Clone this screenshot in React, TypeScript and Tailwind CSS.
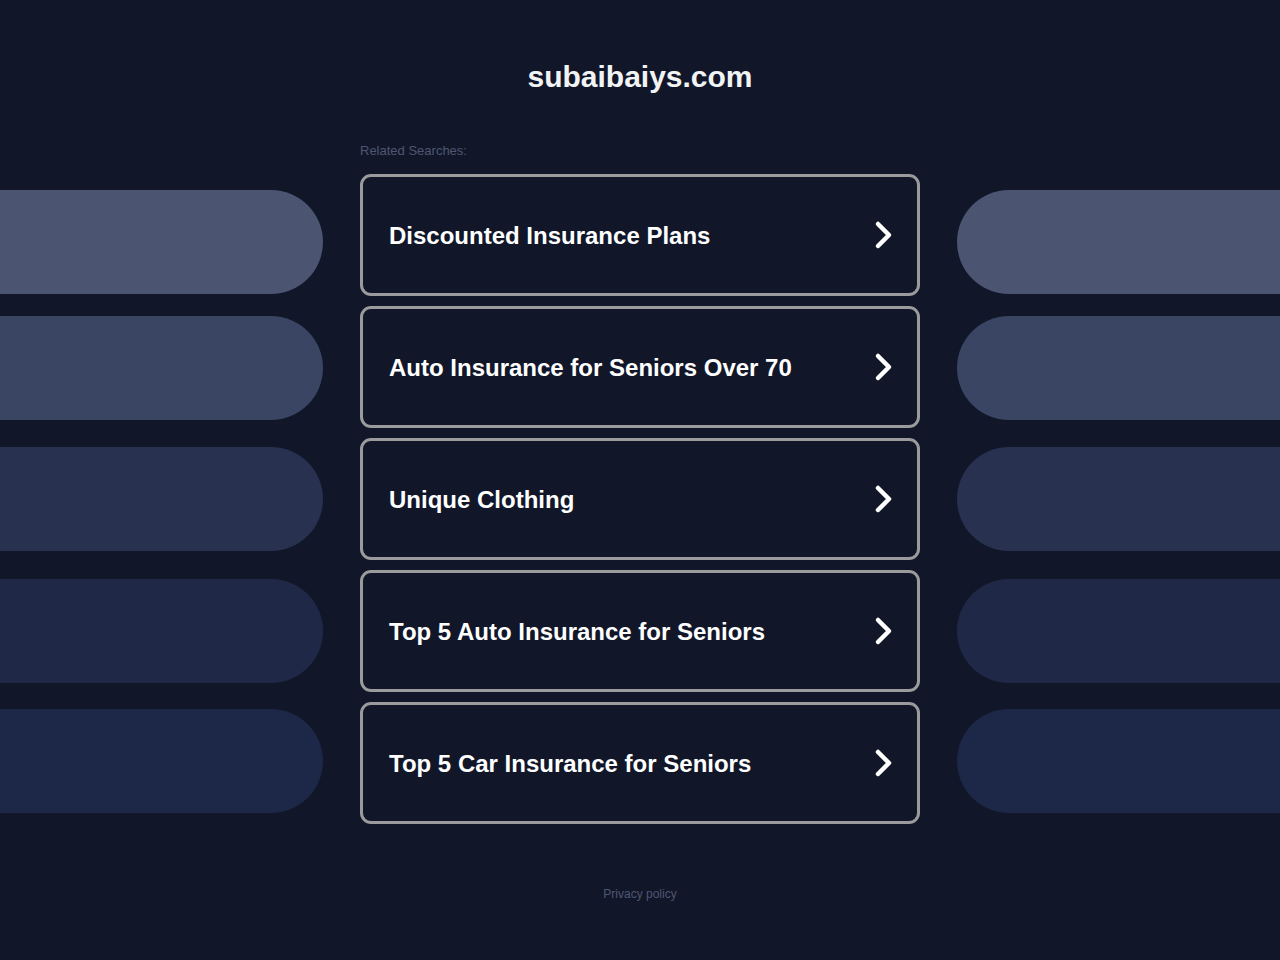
const ROWS = [
  { label: 'Discounted Insurance Plans', pill: 'bg-[#4b5571]', shift: 'mt-[14px]' },
  { label: 'Auto Insurance for Seniors Over 70', pill: 'bg-[#3a4463]', shift: 'mt-[1px]' },
  { label: 'Unique Clothing', pill: 'bg-[#283150]', shift: '' },
  { label: 'Top 5 Auto Insurance for Seniors', pill: 'bg-[#1f2947]', shift: '' },
  { label: 'Top 5 Car Insurance for Seniors', pill: 'bg-[#1d2747]', shift: '-mt-[4px]' },
];

function Chevron() {
  return (
    <svg width="24" height="32" viewBox="0 0 24 32" fill="none" className="shrink-0">
      <polyline points="7,5 18,16 7,27" stroke="#ffffff" strokeWidth="4.5"
                strokeLinecap="round" strokeLinejoin="round" />
    </svg>
  );
}

export default function App() {
  return (
    <div className="min-h-[960px] bg-[#111729] font-['Liberation_Sans',Arial,sans-serif]">
      {/* Titel */}
      <div className="pt-[59px] text-center">
        <h1 className="text-[30px] font-bold leading-[36px] text-[#f2f3f5]">subaibaiys.com</h1>
      </div>

      <div className="mx-auto mt-[48px] w-[560px] text-[13px] leading-[16px] text-[#4f5672]">
        Related Searches:
      </div>

      {/* Rijen */}
      <div className="mt-[15px] flex flex-col gap-[10px]">
        {ROWS.map((r) => (
          <div key={r.label} className="grid grid-cols-[323px_560px_323px] gap-x-[37px]">
            <div className={`h-[104px] self-center rounded-r-full ${r.pill} ${r.shift}`} />
            <a href="#"
               className="flex h-[122px] items-center justify-between rounded-[11px]
                          border-[3px] border-[#9b9b9d] pl-[26px] pr-[22px]">
              <span className="mt-[2px] text-[24px] font-bold text-white">{r.label}</span>
              <Chevron />
            </a>
            <div className={`h-[104px] self-center rounded-l-full ${r.pill} ${r.shift}`} />
          </div>
        ))}
      </div>

      <div className="mt-[63px] text-center text-[12px] leading-[14px] text-[#4f5672]">
        Privacy policy
      </div>
    </div>
  );
}
